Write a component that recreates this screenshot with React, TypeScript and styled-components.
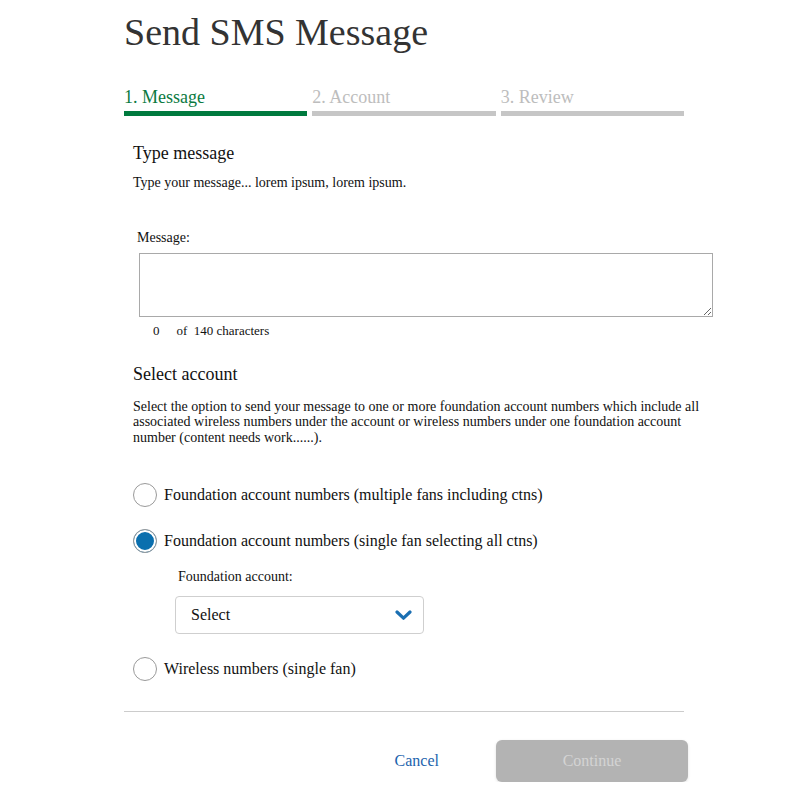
import React, { useState } from 'react';
import styled, { createGlobalStyle } from 'styled-components';

const GlobalStyle = createGlobalStyle`
  body {
    margin: 0;
    background: #fff;
    font-family: 'Liberation Serif', 'Times New Roman', serif;
    color: #111;
  }
`;

const Page = styled.div`
  width: 560px;
  margin-left: 124px;
  padding-top: 10px;
`;

const Title = styled.h1`
  margin: 0;
  font-size: 38px;
  line-height: 44px;
  font-weight: 400;
  color: #333;
`;

const Steps = styled.div`
  display: grid;
  grid-template-columns: repeat(3, 1fr);
  column-gap: 5px;
  margin-top: 32px;
`;

const Step = styled.div<IStep>`
  font-size: 18px;
  line-height: 22px;
  color: ${p => (p.active ? '#0b7a3f' : '#bdbdbd')};
  &::after {
    content: '';
    display: block;
    height: 5px;
    margin-top: 3px;
    background: ${p => (p.active ? '#007a3e' : '#c6c6c6')};
  }
`;

const Form = styled.div`
  padding-left: 9px;
  width: 580px;
`;

const SectionTitle = styled.h2<{ gap: number }>`
  margin: ${p => p.gap}px 0 0;
  font-size: 18px;
  line-height: 22px;
  font-weight: 400;
`;

const Description = styled.p`
  margin: 10px 0 0;
  font-size: 14px;
  line-height: 18px;
`;

const FieldLabel = styled.label<{ indent: number; gap: number }>`
  display: block;
  margin: ${p => p.gap}px 0 0 ${p => p.indent}px;
  font-size: 14px;
  line-height: 18px;
`;

const MessageInput = styled.textarea`
  display: block;
  box-sizing: border-box;
  width: 574px;
  height: 64px;
  margin: 6px 0 0 6px;
  border: 1px solid #a9a9a9;
  border-radius: 0;
  padding: 4px;
  font-family: inherit;
  font-size: 14px;
  resize: both;
  outline: none;
`;

const Counter = styled.div`
  display: flex;
  gap: 17px;
  margin: 6px 0 0 20px;
  font-size: 13px;
  line-height: 16px;
`;

const Paragraph = styled.p`
  margin: 14px 0 0;
  font-size: 14px;
  line-height: 15.4px;
`;

const RadioRow = styled.label<{ gap: number }>`
  display: flex;
  align-items: center;
  gap: 7px;
  margin-top: ${p => p.gap}px;
  font-size: 16px;
  line-height: 24px;
  cursor: pointer;
`;

const RadioCircle = styled.span<{ checked?: boolean }>`
  box-sizing: border-box;
  width: 24px;
  height: 24px;
  border-radius: 50%;
  border: 1px solid #9a9a9a;
  background: ${p => (p.checked ? '#0a6fae' : '#fff')};
  box-shadow: ${p => (p.checked ? 'inset 0 0 0 2px #fff' : 'none')};
  flex: none;
`;

const SubField = styled.div`
  padding-left: 42px;
`;

const SelectBox = styled.div`
  box-sizing: border-box;
  display: flex;
  align-items: center;
  justify-content: space-between;
  width: 249px;
  height: 38px;
  margin-top: 10px;
  padding: 0 11px 0 15px;
  border: 1px solid #cfcfcf;
  border-radius: 4px;
  font-size: 16px;
  cursor: pointer;
`;

const Divider = styled.hr`
  margin: 30px 0 0;
  border: 0;
  border-top: 1px solid #cccccc;
`;

const Footer = styled.div`
  display: flex;
  justify-content: flex-end;
  align-items: center;
  width: 564px;
  margin-top: 28px;
`;

const CancelButton = styled.button`
  border: 0;
  background: none;
  padding: 0;
  margin-right: 57px;
  font-family: inherit;
  font-size: 16px;
  color: #1c63ad;
  cursor: pointer;
`;

const ContinueButton = styled.button`
  width: 192px;
  height: 42px;
  border: 0;
  border-radius: 6px;
  background: #b3b3b3;
  box-shadow: 0 1px 3px rgba(0, 0, 0, 0.12);
  font-family: inherit;
  font-size: 16px;
  color: #d4d4d4;
`;

const Chevron = () => (
  <svg width="17" height="11" viewBox="0 0 17 11">
    <path d="M2 2 L8.5 8.2 L15 2" fill="none" stroke="#1a6fb2" strokeWidth="3.2" strokeLinecap="round" strokeLinejoin="round" />
  </svg>
);

const options = [
  'Foundation account numbers (multiple fans including ctns)',
  'Foundation account numbers (single fan selecting all ctns)',
  'Wireless numbers (single fan)',
];

const App = () => {
  const [message, setMessage] = useState('');
  const [selected] = useState(1);

  return (
    <>
      <GlobalStyle />
      <Page>
        <Title>Send SMS Message</Title>
        <Steps>
          <Step active>1. Message</Step>
          <Step>2. Account</Step>
          <Step>3. Review</Step>
        </Steps>

        <Form>
          <SectionTitle gap={26}>Type message</SectionTitle>
          <Description>Type your message... lorem ipsum, lorem ipsum.</Description>

          <FieldLabel indent={4} gap={37}>Message:</FieldLabel>
          <MessageInput value={message} maxLength={140} onChange={e => setMessage(e.target.value)} />
          <Counter>
            <span>{message.length}</span>
            <span>of&nbsp; 140 characters</span>
          </Counter>

          <SectionTitle gap={24}>Select account</SectionTitle>
          <Paragraph>
            Select the option to send your message to one or more foundation account numbers which include all
            associated wireless numbers under the account or wireless numbers under one foundation account
            number (content needs work......).
          </Paragraph>

          <RadioRow gap={38}>
            <RadioCircle checked={selected === 0} />
            {options[0]}
          </RadioRow>
          <RadioRow gap={22}>
            <RadioCircle checked={selected === 1} />
            {options[1]}
          </RadioRow>
          <SubField>
            <FieldLabel indent={3} gap={15}>Foundation account:</FieldLabel>
            <SelectBox>
              <span>Select</span>
              <Chevron />
            </SelectBox>
          </SubField>
          <RadioRow gap={23}>
            <RadioCircle checked={selected === 2} />
            {options[2]}
          </RadioRow>
        </Form>

        <Divider />
        <Footer>
          <CancelButton>Cancel</CancelButton>
          <ContinueButton disabled>Continue</ContinueButton>
        </Footer>
      </Page>
    </>
  );
};

interface IStep {
  active?: boolean;
}

export default App;
